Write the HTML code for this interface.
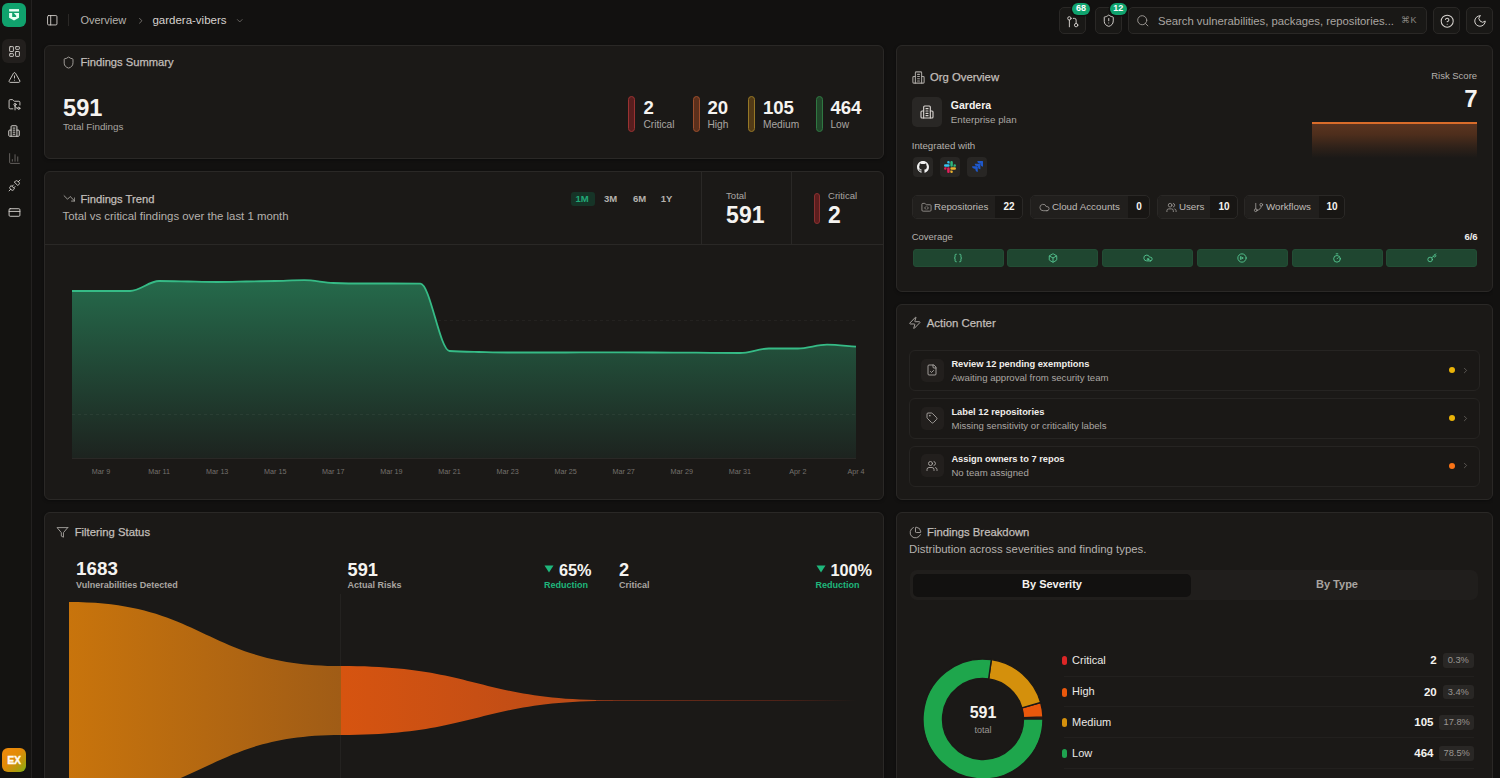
<!DOCTYPE html><html><head><meta charset="utf-8"><style>
*{margin:0;padding:0;box-sizing:border-box}
html,body{width:1500px;height:778px;overflow:hidden;background:#121110;font-family:"Liberation Sans",sans-serif}
.t{position:absolute;line-height:1;white-space:nowrap}
.m{-webkit-text-stroke:0.25px currentColor}
.b{position:absolute}
.card{position:absolute;background:#1b1917;border:1px solid #2a2826;border-radius:6px;box-shadow:0 1px 3px rgba(0,0,0,0.35)}
</style></head><body>
<div class="b" style="left:0px;top:0px;width:32px;height:778px;background:#141311;border-right:1px solid #232120"></div>
<div class="b" style="left:2px;top:3px;width:24px;height:24px;background:#10a26d;border-radius:6px"></div>
<svg class="b" style="left:2px;top:3px" width="24" height="24" viewBox="0 0 24 24"><rect x="7.1" y="6.1" width="9.9" height="2.4" fill="#e8fff3"/><path d="M7.1 10h9.9v4.7L12 17.4 7.1 14.7z" fill="#e8fff3"/><path d="M10.2 10.1h1.6l2.4 2.6v1.4h-4z" fill="#10a26d"/></svg>
<div class="b" style="left:2px;top:39px;width:24px;height:24px;background:#221f1d;border-radius:6px"></div>
<svg class="b" style="left:7.5px;top:44.5px;color:#d6d2ce" width="13" height="13" viewBox="0 0 24 24" fill="none" stroke="currentColor" stroke-linecap="round" stroke-linejoin="round" stroke-width="1.7"><rect x="3" y="3" width="7" height="9" rx="1"/><rect x="14" y="3" width="7" height="5" rx="1"/><rect x="14" y="12" width="7" height="9" rx="1"/><rect x="3" y="16" width="7" height="5" rx="1"/></svg>
<svg class="b" style="left:7.5px;top:71px;color:#d6d2ce" width="13" height="13" viewBox="0 0 24 24" fill="none" stroke="currentColor" stroke-linecap="round" stroke-linejoin="round" stroke-width="1.7"><path d="m21.73 18-8-14a2 2 0 0 0-3.48 0l-8 14A2 2 0 0 0 4 21h16a2 2 0 0 0 1.73-3"/><path d="M12 9v4"/><path d="M12 17h.01"/></svg>
<svg class="b" style="left:7.5px;top:97.5px;color:#d6d2ce" width="13" height="13" viewBox="0 0 24 24" fill="none" stroke="currentColor" stroke-linecap="round" stroke-linejoin="round" stroke-width="1.7"><path d="M9 20H4a2 2 0 0 1-2-2V5a2 2 0 0 1 2-2h3.9a2 2 0 0 1 1.69.9l.81 1.2a2 2 0 0 0 1.67.9H20a2 2 0 0 1 2 2v5"/><circle cx="13" cy="12" r="2"/><path d="M18 19c-2.8 0-5-2.2-5-5v8"/><circle cx="20" cy="19" r="2"/></svg>
<svg class="b" style="left:7px;top:124px;color:#d6d2ce" width="14" height="14" viewBox="0 0 24 24" fill="none" stroke="currentColor" stroke-linecap="round" stroke-linejoin="round" stroke-width="1.7"><path d="M7 21V4.5A1.5 1.5 0 0 1 8.5 3h7A1.5 1.5 0 0 1 17 4.5V21"/><path d="M7 10.5H4.5A1.5 1.5 0 0 0 3 12v7.5A1.5 1.5 0 0 0 4.5 21h15a1.5 1.5 0 0 0 1.5-1.5V12a1.5 1.5 0 0 0-1.5-1.5H17"/><path d="M10.5 7h3"/><path d="M10.5 10.5h3"/><path d="M10.5 14h3"/><path d="M10.5 17.5h3"/></svg>
<svg class="b" style="left:7.5px;top:151.5px;color:#6b6764" width="13" height="13" viewBox="0 0 24 24" fill="none" stroke="currentColor" stroke-linecap="round" stroke-linejoin="round" stroke-width="1.7"><path d="M3 3v16a2 2 0 0 0 2 2h16"/><path d="M18 17V9"/><path d="M13 17V5"/><path d="M8 17v-3"/></svg>
<svg class="b" style="left:7.5px;top:178.5px;color:#d6d2ce" width="13" height="13" viewBox="0 0 24 24" fill="none" stroke="currentColor" stroke-linecap="round" stroke-linejoin="round" stroke-width="1.7"><path d="m19 5 3-3"/><path d="m2 22 3-3"/><path d="M6.3 20.3a2.4 2.4 0 0 0 3.4 0L12 18l-6-6-2.3 2.3a2.4 2.4 0 0 0 0 3.4Z"/><path d="M7.5 13.5 10 11"/><path d="M10.5 16.5 13 14"/><path d="m12 6 6 6 2.3-2.3a2.4 2.4 0 0 0 0-3.4l-2.6-2.6a2.4 2.4 0 0 0-3.4 0Z"/></svg>
<svg class="b" style="left:7.5px;top:205.5px;color:#d6d2ce" width="13" height="13" viewBox="0 0 24 24" fill="none" stroke="currentColor" stroke-linecap="round" stroke-linejoin="round" stroke-width="1.7"><rect width="20" height="14" x="2" y="5" rx="2"/><line x1="2" x2="22" y1="10" y2="10"/></svg>
<div class="b" style="left:2px;top:748px;width:24px;height:24px;background:linear-gradient(135deg,#f08a0c 0%,#e28a08 45%,#b39a0c 75%,#7cb414 100%);border-radius:6px"></div>
<div class="t" style="left:-186.0px;width:400px;text-align:center;top:754.9px;font-size:10.5px;color:#fffaf0;font-weight:700;letter-spacing:-0.3px;-webkit-text-stroke:0.35px #fffaf0;">EX</div>
<svg class="b" style="left:45.8px;top:14.3px;color:#d6d2ce" width="12.5" height="12.5" viewBox="0 0 24 24" fill="none" stroke="currentColor" stroke-linecap="round" stroke-linejoin="round" stroke-width="1.7"><rect width="18" height="18" x="3" y="3" rx="2"/><path d="M9 3v18"/></svg>
<div class="b" style="left:68px;top:14px;width:1px;height:12px;background:#2a2826"></div>
<div class="t" style="left:80.4px;top:15.0px;font-size:11px;color:#b5b1ad;font-weight:400;">Overview</div>
<svg class="b" style="left:135.5px;top:15.5px;color:#8a8682" width="9.5" height="9.5" viewBox="0 0 24 24" fill="none" stroke="currentColor" stroke-linecap="round" stroke-linejoin="round" stroke-width="2"><path d="m9 18 6-6-6-6"/></svg>
<div class="t" style="left:152.4px;top:14.9px;font-size:11.5px;color:#d6d2ce;font-weight:400;">gardera-vibers</div>
<svg class="b" style="left:234.5px;top:15.5px;color:#7a7672" width="9.5" height="9.5" viewBox="0 0 24 24" fill="none" stroke="currentColor" stroke-linecap="round" stroke-linejoin="round" stroke-width="2"><path d="m6 9 6 6 6-6"/></svg>
<div class="b" style="left:1059px;top:7px;width:27px;height:27px;background:#191816;border:1px solid #2a2826;border-radius:5px"></div>
<svg class="b" style="left:1066px;top:14.5px;color:#d6d2ce" width="13.5" height="13.5" viewBox="0 0 24 24" fill="none" stroke="currentColor" stroke-linecap="round" stroke-linejoin="round" stroke-width="1.7"><circle cx="6" cy="6" r="3"/><path d="M6 9v12"/><circle cx="18" cy="18" r="3"/><path d="M18 15V9a3 3 0 0 0-3-3h-2"/></svg>
<div class="b" style="left:1072px;top:3px;width:18px;height:11.5px;background:#10a36e;border-radius:6px;box-shadow:0 0 0 1.5px #121110"></div>
<div class="t" style="left:881.0px;width:400px;text-align:center;top:3.8px;font-size:9px;color:#ffffff;font-weight:700;">68</div>
<div class="b" style="left:1095px;top:7px;width:27px;height:27px;background:#191816;border:1px solid #2a2826;border-radius:5px"></div>
<svg class="b" style="left:1102px;top:14px;color:#d6d2ce" width="13.5" height="13.5" viewBox="0 0 24 24" fill="none" stroke="currentColor" stroke-linecap="round" stroke-linejoin="round" stroke-width="1.7"><path d="M20 13c0 5-3.5 7.5-7.66 8.95a1 1 0 0 1-.67-.01C7.5 20.5 4 18 4 13V6a1 1 0 0 1 1-1c2 0 4.5-1.2 6.24-2.72a1.17 1.17 0 0 1 1.52 0C14.51 3.81 17 5 19 5a1 1 0 0 1 1 1z"/><path d="M12 8v4"/><path d="M12 16h.01"/></svg>
<div class="b" style="left:1110px;top:3px;width:16.5px;height:11.5px;background:#10a36e;border-radius:6px;box-shadow:0 0 0 1.5px #121110"></div>
<div class="t" style="left:918.2px;width:400px;text-align:center;top:3.8px;font-size:9px;color:#ffffff;font-weight:700;">12</div>
<div class="b" style="left:1128px;top:7px;width:299px;height:27px;background:#191816;border:1px solid #2a2826;border-radius:5px"></div>
<svg class="b" style="left:1135.8px;top:13.6px;color:#9a9692" width="13.6" height="13.6" viewBox="0 0 24 24" fill="none" stroke="currentColor" stroke-linecap="round" stroke-linejoin="round" stroke-width="1.7"><circle cx="11" cy="11" r="8"/><path d="m21 21-4.3-4.3"/></svg>
<div class="t" style="left:1157.9px;top:15.7px;font-size:11.3px;color:#a9a5a1;font-weight:400;">Search vulnerabilities, packages, repositories...</div>
<div class="t" style="left:1401.4px;top:16.3px;font-size:9px;color:#8a8682;font-weight:400;">&#8984;K</div>
<div class="b" style="left:1433px;top:7px;width:27px;height:27px;background:#191816;border:1px solid #2a2826;border-radius:5px"></div>
<svg class="b" style="left:1440px;top:13.5px;color:#d6d2ce" width="14.4" height="14.4" viewBox="0 0 24 24" fill="none" stroke="currentColor" stroke-linecap="round" stroke-linejoin="round" stroke-width="1.7"><circle cx="12" cy="12" r="10"/><path d="M9.09 9a3 3 0 0 1 5.83 1c0 2-3 3-3 3"/><path d="M12 17h.01"/></svg>
<div class="b" style="left:1466px;top:7px;width:27px;height:27px;background:#191816;border:1px solid #2a2826;border-radius:5px"></div>
<svg class="b" style="left:1472.5px;top:13.5px;color:#d6d2ce" width="14" height="14" viewBox="0 0 24 24" fill="none" stroke="currentColor" stroke-linecap="round" stroke-linejoin="round" stroke-width="1.7"><path d="M12 3a6 6 0 0 0 9 9 9 9 0 1 1-9-9Z"/></svg>
<div class="card" style="left:44px;top:45px;width:840px;height:114px"></div>
<svg class="b" style="left:61.8px;top:55.9px;color:#a8a4a0" width="13.2" height="13.2" viewBox="0 0 24 24" fill="none" stroke="currentColor" stroke-linecap="round" stroke-linejoin="round" stroke-width="1.7"><path d="M20 13c0 5-3.5 7.5-7.66 8.95a1 1 0 0 1-.67-.01C7.5 20.5 4 18 4 13V6a1 1 0 0 1 1-1c2 0 4.5-1.2 6.24-2.72a1.17 1.17 0 0 1 1.52 0C14.51 3.81 17 5 19 5a1 1 0 0 1 1 1z"/></svg>
<div class="t m" style="left:80.4px;top:56.7px;font-size:11.2px;color:#c2beba;font-weight:500;">Findings Summary</div>
<div class="t" style="left:63.1px;top:97.0px;font-size:23.6px;color:#f5f3f0;font-weight:700;">591</div>
<div class="t" style="left:62.9px;top:121.7px;font-size:9.8px;color:#aaa6a2;font-weight:400;">Total Findings</div>
<div class="b" style="left:628px;top:95.5px;width:7px;height:36px;background:#581e1e;border:1px solid #9a3232;border-radius:4px"></div>
<div class="t" style="left:643.4px;top:98.8px;font-size:18.6px;color:#f5f3f0;font-weight:700;">2</div>
<div class="t" style="left:643.4px;top:119.5px;font-size:10.2px;color:#aaa6a2;font-weight:400;">Critical</div>
<div class="b" style="left:692.5px;top:95.5px;width:7px;height:36px;background:#5c301c;border:1px solid #9c4e2c;border-radius:4px"></div>
<div class="t" style="left:707.4px;top:98.8px;font-size:18.6px;color:#f5f3f0;font-weight:700;">20</div>
<div class="t" style="left:707.4px;top:119.5px;font-size:10.2px;color:#aaa6a2;font-weight:400;">High</div>
<div class="b" style="left:748px;top:95.5px;width:7px;height:36px;background:#523a16;border:1px solid #967826;border-radius:4px"></div>
<div class="t" style="left:762.9px;top:98.8px;font-size:18.6px;color:#f5f3f0;font-weight:700;">105</div>
<div class="t" style="left:762.9px;top:119.5px;font-size:10.2px;color:#aaa6a2;font-weight:400;">Medium</div>
<div class="b" style="left:815.5px;top:95.5px;width:7px;height:36px;background:#22462a;border:1px solid #2f7842;border-radius:4px"></div>
<div class="t" style="left:830.4px;top:98.8px;font-size:18.6px;color:#f5f3f0;font-weight:700;">464</div>
<div class="t" style="left:830.4px;top:119.5px;font-size:10.2px;color:#aaa6a2;font-weight:400;">Low</div>
<div class="card" style="left:44px;top:171px;width:840px;height:329px"></div>
<div class="b" style="left:45px;top:244px;width:838px;height:1px;background:#2a2826"></div>
<div class="b" style="left:701px;top:172px;width:1px;height:72px;background:#2a2826"></div>
<div class="b" style="left:790.5px;top:172px;width:1px;height:72px;background:#2a2826"></div>
<svg class="b" style="left:62.5px;top:192px;color:#a8a4a0" width="12.8" height="12.8" viewBox="0 0 24 24" fill="none" stroke="currentColor" stroke-linecap="round" stroke-linejoin="round" stroke-width="1.7"><path d="m22 17-8.5-8.5-5 5L2 7"/><path d="M16 17h6v-6"/></svg>
<div class="t m" style="left:80.4px;top:194.1px;font-size:11.2px;color:#c2beba;font-weight:500;">Findings Trend</div>
<div class="t" style="left:62.6px;top:211.3px;font-size:11.4px;color:#b5b1ad;font-weight:400;">Total vs critical findings over the last 1 month</div>
<div class="b" style="left:570.5px;top:191.5px;width:24px;height:14.5px;background:#163427;border-radius:3px"></div>
<div class="t" style="left:382.0px;width:400px;text-align:center;top:193.8px;font-size:9.5px;color:#22a877;font-weight:700;">1M</div>
<div class="t" style="left:410.5px;width:400px;text-align:center;top:193.8px;font-size:9.5px;color:#b5b1ad;font-weight:700;">3M</div>
<div class="t" style="left:439.5px;width:400px;text-align:center;top:193.8px;font-size:9.5px;color:#b5b1ad;font-weight:700;">6M</div>
<div class="t" style="left:466.5px;width:400px;text-align:center;top:193.8px;font-size:9.5px;color:#b5b1ad;font-weight:700;">1Y</div>
<div class="t" style="left:726.1px;top:190.8px;font-size:9.5px;color:#aaa6a2;font-weight:400;">Total</div>
<div class="t" style="left:726.1px;top:204.2px;font-size:23px;color:#f5f3f0;font-weight:700;">591</div>
<div class="b" style="left:814px;top:192.5px;width:6px;height:31px;background:#5c1e1e;border:1px solid #8a3030;border-radius:3px"></div>
<div class="t" style="left:828.1px;top:190.8px;font-size:9.5px;color:#aaa6a2;font-weight:400;">Critical</div>
<div class="t" style="left:828.1px;top:204.2px;font-size:23px;color:#f5f3f0;font-weight:700;">2</div>
<svg class="b" style="left:0;top:0" width="1500" height="778" viewBox="0 0 1500 778">
<defs><linearGradient id="ga" x1="0" y1="280" x2="0" y2="459" gradientUnits="userSpaceOnUse"><stop offset="0" stop-color="#256a4b"/><stop offset="1" stop-color="#1d231f"/></linearGradient></defs>
<line x1="72" y1="320.5" x2="856" y2="320.5" stroke="#242220" stroke-width="1" stroke-dasharray="3 3"/>

<path d="M72.0,291.0C81.7,291.0,91.4,291.0,101.0,291.0C110.7,291.0,120.4,291.0,130.1,291.0C139.8,291.0,149.4,281.0,159.1,281.0C168.8,281.0,178.5,281.3,188.1,281.5C197.8,281.7,207.5,282.0,217.2,282.0C226.9,282.0,236.5,281.7,246.2,281.5C255.9,281.3,265.6,281.2,275.3,281.0C284.9,280.8,294.6,280.2,304.3,280.2C314.0,280.2,323.7,282.7,333.3,283.0C343.0,283.3,352.7,283.5,362.4,283.5C372.0,283.5,381.7,283.5,391.4,283.5C401.1,283.5,410.8,283.6,420.4,283.7C430.1,283.8,439.8,350.3,449.5,351.0C459.2,351.7,468.8,351.8,478.5,352.0C488.2,352.2,497.9,352.5,507.6,352.5C517.2,352.5,526.9,352.5,536.6,352.5C546.3,352.5,556.0,352.5,565.6,352.5C575.3,352.5,585.0,352.3,594.7,352.3C604.3,352.3,614.0,352.3,623.7,352.3C633.4,352.3,643.1,352.4,652.7,352.5C662.4,352.6,672.1,352.6,681.8,352.6C691.5,352.7,701.1,352.7,710.8,352.8C720.5,352.9,730.2,353.0,739.9,353.0C749.5,353.0,759.2,348.5,768.9,348.5C778.6,348.5,788.2,348.5,797.9,348.5C807.6,348.5,817.3,344.6,827.0,344.6C836.6,344.6,846.3,346.0,856.0,346.7L856,458.5L72,458.5Z" fill="url(#ga)"/>
<line x1="72" y1="414.5" x2="856" y2="414.5" stroke="#ffffff" stroke-opacity="0.05" stroke-width="1" stroke-dasharray="3 3"/>
<line x1="72" y1="458.5" x2="856" y2="458.5" stroke="#2a2826" stroke-width="1"/>
<path d="M72.0,291.0C81.7,291.0,91.4,291.0,101.0,291.0C110.7,291.0,120.4,291.0,130.1,291.0C139.8,291.0,149.4,281.0,159.1,281.0C168.8,281.0,178.5,281.3,188.1,281.5C197.8,281.7,207.5,282.0,217.2,282.0C226.9,282.0,236.5,281.7,246.2,281.5C255.9,281.3,265.6,281.2,275.3,281.0C284.9,280.8,294.6,280.2,304.3,280.2C314.0,280.2,323.7,282.7,333.3,283.0C343.0,283.3,352.7,283.5,362.4,283.5C372.0,283.5,381.7,283.5,391.4,283.5C401.1,283.5,410.8,283.6,420.4,283.7C430.1,283.8,439.8,350.3,449.5,351.0C459.2,351.7,468.8,351.8,478.5,352.0C488.2,352.2,497.9,352.5,507.6,352.5C517.2,352.5,526.9,352.5,536.6,352.5C546.3,352.5,556.0,352.5,565.6,352.5C575.3,352.5,585.0,352.3,594.7,352.3C604.3,352.3,614.0,352.3,623.7,352.3C633.4,352.3,643.1,352.4,652.7,352.5C662.4,352.6,672.1,352.6,681.8,352.6C691.5,352.7,701.1,352.7,710.8,352.8C720.5,352.9,730.2,353.0,739.9,353.0C749.5,353.0,759.2,348.5,768.9,348.5C778.6,348.5,788.2,348.5,797.9,348.5C807.6,348.5,817.3,344.6,827.0,344.6C836.6,344.6,846.3,346.0,856.0,346.7" fill="none" stroke="#36bb86" stroke-width="1.8"/>
</svg>
<div class="t" style="left:-99.0px;width:400px;text-align:center;top:468.1px;font-size:7.2px;color:#75716d;font-weight:400;">Mar 9</div>
<div class="t" style="left:-40.9px;width:400px;text-align:center;top:468.1px;font-size:7.2px;color:#75716d;font-weight:400;">Mar 11</div>
<div class="t" style="left:17.2px;width:400px;text-align:center;top:468.1px;font-size:7.2px;color:#75716d;font-weight:400;">Mar 13</div>
<div class="t" style="left:75.3px;width:400px;text-align:center;top:468.1px;font-size:7.2px;color:#75716d;font-weight:400;">Mar 15</div>
<div class="t" style="left:133.3px;width:400px;text-align:center;top:468.1px;font-size:7.2px;color:#75716d;font-weight:400;">Mar 17</div>
<div class="t" style="left:191.4px;width:400px;text-align:center;top:468.1px;font-size:7.2px;color:#75716d;font-weight:400;">Mar 19</div>
<div class="t" style="left:249.5px;width:400px;text-align:center;top:468.1px;font-size:7.2px;color:#75716d;font-weight:400;">Mar 21</div>
<div class="t" style="left:307.6px;width:400px;text-align:center;top:468.1px;font-size:7.2px;color:#75716d;font-weight:400;">Mar 23</div>
<div class="t" style="left:365.6px;width:400px;text-align:center;top:468.1px;font-size:7.2px;color:#75716d;font-weight:400;">Mar 25</div>
<div class="t" style="left:423.7px;width:400px;text-align:center;top:468.1px;font-size:7.2px;color:#75716d;font-weight:400;">Mar 27</div>
<div class="t" style="left:481.8px;width:400px;text-align:center;top:468.1px;font-size:7.2px;color:#75716d;font-weight:400;">Mar 29</div>
<div class="t" style="left:539.9px;width:400px;text-align:center;top:468.1px;font-size:7.2px;color:#75716d;font-weight:400;">Mar 31</div>
<div class="t" style="left:597.9px;width:400px;text-align:center;top:468.1px;font-size:7.2px;color:#75716d;font-weight:400;">Apr 2</div>
<div class="t" style="left:656.0px;width:400px;text-align:center;top:468.1px;font-size:7.2px;color:#75716d;font-weight:400;">Apr 4</div>
<div class="card" style="left:44px;top:512px;width:840px;height:300px"></div>
<svg class="b" style="left:56.2px;top:526.1px;color:#a8a4a0" width="12.8" height="12.8" viewBox="0 0 24 24" fill="none" stroke="currentColor" stroke-linecap="round" stroke-linejoin="round" stroke-width="1.7"><polygon points="22 3 2 3 10 12.46 10 19 14 21 14 12.46 22 3"/></svg>
<div class="t m" style="left:74.7px;top:526.8px;font-size:11.3px;color:#c2beba;font-weight:500;">Filtering Status</div>
<div class="b" style="left:340px;top:594px;width:1px;height:184px;background:#242220"></div>
<svg class="b" style="left:0;top:0" width="1500" height="778" viewBox="0 0 1500 778">
<defs>
<linearGradient id="s1" x1="69" y1="0" x2="341" y2="0" gradientUnits="userSpaceOnUse"><stop offset="0" stop-color="#c8740c"/><stop offset="1" stop-color="#a05c16"/></linearGradient>
<linearGradient id="s2" x1="341" y1="0" x2="613" y2="0" gradientUnits="userSpaceOnUse"><stop offset="0" stop-color="#d65410"/><stop offset="1" stop-color="#b84a18"/></linearGradient>
</defs>
<path d="M69,602 C205,602 205,666 341,666 L341,735 C205,735 205,799 69,799 Z" fill="url(#s1)"/>
<path d="M341,666 C477,666 477,700.3 613,700.3 L613,700.7 C477,700.7 477,735 341,735 Z" fill="url(#s2)"/>
<linearGradient id="s3" x1="613" y1="0" x2="856" y2="0" gradientUnits="userSpaceOnUse"><stop offset="0" stop-color="#8a3418"/><stop offset="0.7" stop-color="#5a2418"/><stop offset="1" stop-color="#1b1917"/></linearGradient><rect x="596" y="700.1" width="260" height="0.8" fill="url(#s3)"/>
</svg>
<div class="t" style="left:76.1px;top:560.4px;font-size:18.8px;color:#f5f3f0;font-weight:700;">1683</div>
<div class="t" style="left:76.1px;top:580.5px;font-size:9px;color:#aaa6a2;font-weight:700;">Vulnerabilities Detected</div>
<div class="t" style="left:347.6px;top:560.8px;font-size:18.2px;color:#f5f3f0;font-weight:700;">591</div>
<div class="t" style="left:347.6px;top:580.5px;font-size:9px;color:#aaa6a2;font-weight:700;">Actual Risks</div>
<svg class="b" style="left:544px;top:565px" width="10" height="8" viewBox="0 0 10 8"><path d="M0.5 0.5h9L5 7.5z" fill="#1fb77c"/></svg>
<div class="t" style="left:559.0px;top:562.4px;font-size:16.3px;color:#f5f3f0;font-weight:700;">65%</div>
<div class="t" style="left:544.1px;top:580.5px;font-size:9px;color:#1fb77c;font-weight:700;">Reduction</div>
<div class="t" style="left:619.1px;top:560.8px;font-size:18.2px;color:#f5f3f0;font-weight:700;">2</div>
<div class="t" style="left:619.1px;top:580.5px;font-size:9px;color:#aaa6a2;font-weight:700;">Critical</div>
<svg class="b" style="left:815.5px;top:565px" width="10" height="8" viewBox="0 0 10 8"><path d="M0.5 0.5h9L5 7.5z" fill="#1fb77c"/></svg>
<div class="t" style="left:830.4px;top:562.4px;font-size:16.3px;color:#f5f3f0;font-weight:700;">100%</div>
<div class="t" style="left:815.4px;top:580.5px;font-size:9px;color:#1fb77c;font-weight:700;">Reduction</div>
<div class="card" style="left:896px;top:45px;width:597px;height:247px"></div>
<svg class="b" style="left:910.5px;top:70px;color:#a8a4a0" width="15" height="15" viewBox="0 0 24 24" fill="none" stroke="currentColor" stroke-linecap="round" stroke-linejoin="round" stroke-width="1.7"><path d="M7 21V4.5A1.5 1.5 0 0 1 8.5 3h7A1.5 1.5 0 0 1 17 4.5V21"/><path d="M7 10.5H4.5A1.5 1.5 0 0 0 3 12v7.5A1.5 1.5 0 0 0 4.5 21h15a1.5 1.5 0 0 0 1.5-1.5V12a1.5 1.5 0 0 0-1.5-1.5H17"/><path d="M10.5 7h3"/><path d="M10.5 10.5h3"/><path d="M10.5 14h3"/><path d="M10.5 17.5h3"/></svg>
<div class="t m" style="left:930.0px;top:71.7px;font-size:11.3px;color:#c2beba;font-weight:500;">Org Overview</div>
<div class="b" style="left:912px;top:97px;width:30px;height:30px;background:#292725;border-radius:5px"></div>
<svg class="b" style="left:919px;top:104px;color:#d6d2ce" width="16" height="16" viewBox="0 0 24 24" fill="none" stroke="currentColor" stroke-linecap="round" stroke-linejoin="round" stroke-width="1.7"><path d="M7 21V4.5A1.5 1.5 0 0 1 8.5 3h7A1.5 1.5 0 0 1 17 4.5V21"/><path d="M7 10.5H4.5A1.5 1.5 0 0 0 3 12v7.5A1.5 1.5 0 0 0 4.5 21h15a1.5 1.5 0 0 0 1.5-1.5V12a1.5 1.5 0 0 0-1.5-1.5H17"/><path d="M10.5 7h3"/><path d="M10.5 10.5h3"/><path d="M10.5 14h3"/><path d="M10.5 17.5h3"/></svg>
<div class="t" style="left:950.8px;top:100.0px;font-size:10.5px;color:#f5f3f0;font-weight:700;">Gardera</div>
<div class="t" style="left:950.8px;top:114.8px;font-size:9.8px;color:#aaa6a2;font-weight:400;">Enterprise plan</div>
<div class="t" style="left:911.7px;top:140.7px;font-size:9.7px;color:#b5b1ad;font-weight:400;">Integrated with</div>
<div class="b" style="left:913px;top:156.5px;width:20px;height:20px;background:#282624;border-radius:4px"></div>
<div class="b" style="left:940px;top:156.5px;width:20px;height:20px;background:#282624;border-radius:4px"></div>
<div class="b" style="left:967px;top:156.5px;width:20px;height:20px;background:#282624;border-radius:4px"></div>
<svg class="b" style="left:917px;top:160.5px" width="12" height="12" viewBox="0 0 16 16"><path fill="#f2f2f2" d="M8 0C3.58 0 0 3.58 0 8c0 3.54 2.29 6.53 5.47 7.59.4.07.55-.17.55-.38 0-.19-.01-.82-.01-1.49-2.01.37-2.53-.49-2.69-.94-.09-.23-.48-.94-.82-1.13-.28-.15-.68-.52-.01-.53.63-.01 1.08.58 1.23.82.72 1.21 1.87.87 2.33.66.07-.52.28-.87.51-1.07-1.78-.2-3.64-.89-3.64-3.95 0-.87.31-1.59.82-2.15-.08-.2-.36-1.02.08-2.12 0 0 .67-.21 2.2.82.64-.18 1.32-.27 2-.27.68 0 1.36.09 2 .27 1.53-1.04 2.2-.82 2.2-.82.44 1.1.16 1.92.08 2.12.51.56.82 1.27.82 2.15 0 3.07-1.87 3.75-3.65 3.95.29.25.54.73.54 1.48 0 1.07-.01 1.93-.01 2.2 0 .21.15.46.55.38A8.013 8.013 0 0016 8c0-4.42-3.58-8-8-8z"/></svg>
<svg class="b" style="left:944px;top:160.5px" width="12" height="12" viewBox="0 0 24 24"><path d="M5.042 15.165a2.528 2.528 0 0 1-2.52 2.523A2.528 2.528 0 0 1 0 15.165a2.527 2.527 0 0 1 2.522-2.52h2.52v2.52zM6.313 15.165a2.527 2.527 0 0 1 2.521-2.52 2.527 2.527 0 0 1 2.521 2.52v6.313A2.528 2.528 0 0 1 8.834 24a2.528 2.528 0 0 1-2.521-2.522v-6.313z" fill="#E01E5A"/><path d="M8.834 5.042a2.528 2.528 0 0 1-2.521-2.52A2.528 2.528 0 0 1 8.834 0a2.528 2.528 0 0 1 2.521 2.522v2.52H8.834zM8.834 6.313a2.528 2.528 0 0 1 2.521 2.521 2.528 2.528 0 0 1-2.521 2.521H2.522A2.528 2.528 0 0 1 0 8.834a2.528 2.528 0 0 1 2.522-2.521h6.312z" fill="#36C5F0"/><path d="M18.956 8.834a2.528 2.528 0 0 1 2.522-2.521A2.528 2.528 0 0 1 24 8.834a2.528 2.528 0 0 1-2.522 2.521h-2.522V8.834zM17.688 8.834a2.528 2.528 0 0 1-2.523 2.521 2.527 2.527 0 0 1-2.52-2.521V2.522A2.527 2.527 0 0 1 15.165 0a2.528 2.528 0 0 1 2.523 2.522v6.312z" fill="#2EB67D"/><path d="M15.165 18.956a2.528 2.528 0 0 1 2.523 2.522A2.528 2.528 0 0 1 15.165 24a2.527 2.527 0 0 1-2.52-2.522v-2.522h2.52zM15.165 17.688a2.527 2.527 0 0 1-2.52-2.523 2.526 2.526 0 0 1 2.52-2.52h6.313A2.527 2.527 0 0 1 24 15.165a2.528 2.528 0 0 1-2.522 2.523h-6.313z" fill="#ECB22E"/></svg>
<svg class="b" style="left:971.5px;top:161px" width="11" height="11" viewBox="0 0 24 24"><path fill="#1e58cc" d="M11.571 11.513H0a5.218 5.218 0 0 0 5.232 5.215h2.13v2.057A5.215 5.215 0 0 0 12.575 24V12.518a1.005 1.005 0 0 0-1.005-1.005zm5.723-5.756H5.736a5.215 5.215 0 0 0 5.215 5.214h2.129v2.058a5.218 5.218 0 0 0 5.215 5.214V6.758a1.001 1.001 0 0 0-1.001-1.001zM23.013 0H11.455a5.215 5.215 0 0 0 5.215 5.215h2.129v2.057A5.215 5.215 0 0 0 24 12.483V1.005A1.001 1.001 0 0 0 23.013 0Z"/></svg>
<div class="t" style="right:22.9px;top:70.8px;font-size:9.5px;color:#b5b1ad;font-weight:400;">Risk Score</div>
<div class="t" style="right:22.4px;top:86.7px;font-size:24px;color:#f5f3f0;font-weight:700;">7</div>
<div class="b" style="left:1312px;top:124px;width:165px;height:34px;background:linear-gradient(180deg,#5a3420 0%,#4e2e1c 30%,#2e2119 70%,#1b1917 100%)"></div>
<div class="b" style="left:1312px;top:122px;width:165px;height:2px;background:#d96c2a"></div>
<div class="b" style="left:912px;top:195px;width:111px;height:24px;background:#181614;border:1px solid #2a2826;border-radius:5px;overflow:hidden"></div>
<div class="b" style="left:913px;top:196px;width:82px;height:22px;background:#211f1d;border-radius:4px 0 0 4px"></div>
<svg class="b" style="left:920.5px;top:201.5px;color:#a8a4a0" width="11" height="11" viewBox="0 0 24 24" fill="none" stroke="currentColor" stroke-linecap="round" stroke-linejoin="round" stroke-width="1.7"><path d="M10 10.5 8 13l2 2.5"/><path d="m14 10.5 2 2.5-2 2.5"/><path d="M20 20a2 2 0 0 0 2-2V8a2 2 0 0 0-2-2h-7.9a2 2 0 0 1-1.69-.9L9.6 3.9A2 2 0 0 0 7.93 3H4a2 2 0 0 0-2 2v13a2 2 0 0 0 2 2z"/></svg>
<div class="t" style="left:933.9px;top:202.1px;font-size:9.8px;color:#bfbbb7;font-weight:400;">Repositories</div>
<div class="t" style="left:809.0px;width:400px;text-align:center;top:201.5px;font-size:10px;color:#f5f3f0;font-weight:700;">22</div>
<div class="b" style="left:1030px;top:195px;width:120px;height:24px;background:#181614;border:1px solid #2a2826;border-radius:5px;overflow:hidden"></div>
<div class="b" style="left:1031px;top:196px;width:97px;height:22px;background:#211f1d;border-radius:4px 0 0 4px"></div>
<svg class="b" style="left:1038.5px;top:201.5px;color:#a8a4a0" width="11" height="11" viewBox="0 0 24 24" fill="none" stroke="currentColor" stroke-linecap="round" stroke-linejoin="round" stroke-width="1.7"><path d="M17.5 19H9a7 7 0 1 1 6.71-9h1.79a4.5 4.5 0 1 1 0 9Z"/></svg>
<div class="t" style="left:1051.9px;top:202.1px;font-size:9.8px;color:#bfbbb7;font-weight:400;">Cloud Accounts</div>
<div class="t" style="left:939.0px;width:400px;text-align:center;top:201.5px;font-size:10px;color:#f5f3f0;font-weight:700;">0</div>
<div class="b" style="left:1157px;top:195px;width:81px;height:24px;background:#181614;border:1px solid #2a2826;border-radius:5px;overflow:hidden"></div>
<div class="b" style="left:1158px;top:196px;width:52px;height:22px;background:#211f1d;border-radius:4px 0 0 4px"></div>
<svg class="b" style="left:1165.5px;top:201.5px;color:#a8a4a0" width="11" height="11" viewBox="0 0 24 24" fill="none" stroke="currentColor" stroke-linecap="round" stroke-linejoin="round" stroke-width="1.7"><path d="M16 21v-2a4 4 0 0 0-4-4H6a4 4 0 0 0-4 4v2"/><circle cx="9" cy="7" r="4"/><path d="M22 21v-2a4 4 0 0 0-3-3.87"/><path d="M16 3.13a4 4 0 0 1 0 7.75"/></svg>
<div class="t" style="left:1178.9px;top:202.1px;font-size:9.8px;color:#bfbbb7;font-weight:400;">Users</div>
<div class="t" style="left:1024.0px;width:400px;text-align:center;top:201.5px;font-size:10px;color:#f5f3f0;font-weight:700;">10</div>
<div class="b" style="left:1244px;top:195px;width:101px;height:24px;background:#181614;border:1px solid #2a2826;border-radius:5px;overflow:hidden"></div>
<div class="b" style="left:1245px;top:196px;width:74px;height:22px;background:#211f1d;border-radius:4px 0 0 4px"></div>
<svg class="b" style="left:1252.5px;top:201.5px;color:#a8a4a0" width="11" height="11" viewBox="0 0 24 24" fill="none" stroke="currentColor" stroke-linecap="round" stroke-linejoin="round" stroke-width="1.7"><line x1="6" x2="6" y1="3" y2="15"/><circle cx="18" cy="6" r="3"/><circle cx="6" cy="18" r="3"/><path d="M18 9a9 9 0 0 1-9 9"/></svg>
<div class="t" style="left:1265.9px;top:202.1px;font-size:9.8px;color:#bfbbb7;font-weight:400;">Workflows</div>
<div class="t" style="left:1132.0px;width:400px;text-align:center;top:201.5px;font-size:10px;color:#f5f3f0;font-weight:700;">10</div>
<div class="t" style="left:911.7px;top:232.4px;font-size:9.5px;color:#b5b1ad;font-weight:400;">Coverage</div>
<div class="t" style="right:22.4px;top:232.4px;font-size:9.5px;color:#f0eeeb;font-weight:700;">6/6</div>
<div class="b" style="left:912.5px;top:249px;width:91.2px;height:17.5px;background:#1f4630;border:1px solid #234d35;border-radius:3px"></div>
<svg class="b" style="left:953.1px;top:252.5px;color:#5ad39a" width="10" height="10" viewBox="0 0 24 24" fill="none" stroke="currentColor" stroke-linecap="round" stroke-linejoin="round" stroke-width="2"><path d="M8 3H7a2 2 0 0 0-2 2v5a2 2 0 0 1-2 2 2 2 0 0 1 2 2v5c0 1.1.9 2 2 2h1"/><path d="M16 21h1a2 2 0 0 0 2-2v-5c0-1.1.9-2 2-2a2 2 0 0 1-2-2V5a2 2 0 0 0-2-2h-1"/></svg>
<div class="b" style="left:1007.2px;top:249px;width:91.2px;height:17.5px;background:#1f4630;border:1px solid #234d35;border-radius:3px"></div>
<svg class="b" style="left:1047.9px;top:252.5px;color:#5ad39a" width="10" height="10" viewBox="0 0 24 24" fill="none" stroke="currentColor" stroke-linecap="round" stroke-linejoin="round" stroke-width="2"><path d="M21 8a2 2 0 0 0-1-1.73l-7-4a2 2 0 0 0-2 0l-7 4A2 2 0 0 0 3 8v8a2 2 0 0 0 1 1.73l7 4a2 2 0 0 0 2 0l7-4A2 2 0 0 0 21 16Z"/><path d="m3.3 7 8.7 5 8.7-5"/><path d="M12 22V12"/></svg>
<div class="b" style="left:1102.0px;top:249px;width:91.2px;height:17.5px;background:#1f4630;border:1px solid #234d35;border-radius:3px"></div>
<svg class="b" style="left:1142.6px;top:252.5px;color:#5ad39a" width="10" height="10" viewBox="0 0 24 24" fill="none" stroke="currentColor" stroke-linecap="round" stroke-linejoin="round" stroke-width="2"><path d="M17.5 19H9a7 7 0 1 1 6.71-9h1.79a4.5 4.5 0 1 1 0 9Z"/><circle cx="12" cy="15" r="2"/></svg>
<div class="b" style="left:1196.8px;top:249px;width:91.2px;height:17.5px;background:#1f4630;border:1px solid #234d35;border-radius:3px"></div>
<svg class="b" style="left:1237.4px;top:252.5px;color:#5ad39a" width="10" height="10" viewBox="0 0 24 24" fill="none" stroke="currentColor" stroke-linecap="round" stroke-linejoin="round" stroke-width="2"><circle cx="12" cy="12" r="10"/><path d="m9 9 6 3-6 3z"/></svg>
<div class="b" style="left:1291.5px;top:249px;width:91.2px;height:17.5px;background:#1f4630;border:1px solid #234d35;border-radius:3px"></div>
<svg class="b" style="left:1332.1px;top:252.5px;color:#5ad39a" width="10" height="10" viewBox="0 0 24 24" fill="none" stroke="currentColor" stroke-linecap="round" stroke-linejoin="round" stroke-width="2"><line x1="10" x2="14" y1="2" y2="2"/><line x1="12" x2="15" y1="14" y2="11"/><circle cx="12" cy="14" r="8"/></svg>
<div class="b" style="left:1386.2px;top:249px;width:91.2px;height:17.5px;background:#1f4630;border:1px solid #234d35;border-radius:3px"></div>
<svg class="b" style="left:1426.9px;top:252.5px;color:#5ad39a" width="10" height="10" viewBox="0 0 24 24" fill="none" stroke="currentColor" stroke-linecap="round" stroke-linejoin="round" stroke-width="2"><path d="m15.5 7.5 2.3 2.3a1 1 0 0 0 1.4 0l2.1-2.1a1 1 0 0 0 0-1.4L19 4"/><path d="m21 2-9.6 9.6"/><circle cx="7.5" cy="15.5" r="5.5"/></svg>
<div class="card" style="left:896px;top:304px;width:597px;height:196px"></div>
<svg class="b" style="left:908.3px;top:316.2px;color:#a8a4a0" width="13.7" height="13.7" viewBox="0 0 24 24" fill="none" stroke="currentColor" stroke-linecap="round" stroke-linejoin="round" stroke-width="1.7"><path d="M4 14a1 1 0 0 1-.78-1.63l9.9-10.2a.5.5 0 0 1 .86.46l-1.92 6.02A1 1 0 0 0 13 10h7a1 1 0 0 1 .78 1.63l-9.9 10.2a.5.5 0 0 1-.86-.46l1.92-6.02A1 1 0 0 0 11 14z"/></svg>
<div class="t m" style="left:926.7px;top:317.8px;font-size:11.4px;color:#c2beba;font-weight:500;">Action Center</div>
<div class="b" style="left:909px;top:350px;width:571px;height:41px;background:#1a1816;border:1px solid #262422;border-radius:6px"></div>
<div class="b" style="left:920.5px;top:358.5px;width:23px;height:23px;background:#221f1d;border-radius:5px"></div>
<svg class="b" style="left:926px;top:364px;color:#b5b1ad" width="12" height="12" viewBox="0 0 24 24" fill="none" stroke="currentColor" stroke-linecap="round" stroke-linejoin="round" stroke-width="1.7"><path d="M15 2H6a2 2 0 0 0-2 2v16a2 2 0 0 0 2 2h12a2 2 0 0 0 2-2V7Z"/><path d="M14 2v4a2 2 0 0 0 2 2h4"/><path d="m9 15 2 2 4-4"/></svg>
<div class="t" style="left:951.4px;top:359.5px;font-size:9.3px;color:#f0eeeb;font-weight:700;">Review 12 pending exemptions</div>
<div class="t" style="left:951.4px;top:372.5px;font-size:9.6px;color:#aaa6a2;font-weight:400;">Awaiting approval from security team</div>
<div class="b" style="left:1449px;top:367px;width:6px;height:6px;background:#eab308;border-radius:50%"></div>
<svg class="b" style="left:1461px;top:365.5px;color:#7a7672" width="9" height="9" viewBox="0 0 24 24" fill="none" stroke="currentColor" stroke-linecap="round" stroke-linejoin="round" stroke-width="1.7"><path d="m9 18 6-6-6-6"/></svg>
<div class="b" style="left:909px;top:398px;width:571px;height:41px;background:#1a1816;border:1px solid #262422;border-radius:6px"></div>
<div class="b" style="left:920.5px;top:406.5px;width:23px;height:23px;background:#221f1d;border-radius:5px"></div>
<svg class="b" style="left:926px;top:412px;color:#b5b1ad" width="12" height="12" viewBox="0 0 24 24" fill="none" stroke="currentColor" stroke-linecap="round" stroke-linejoin="round" stroke-width="1.7"><path d="M12.586 2.586A2 2 0 0 0 11.172 2H4a2 2 0 0 0-2 2v7.172a2 2 0 0 0 .586 1.414l8.704 8.704a2.426 2.426 0 0 0 3.42 0l6.58-6.58a2.426 2.426 0 0 0 0-3.42z"/><circle cx="7.5" cy="7.5" r=".5" fill="currentColor"/></svg>
<div class="t" style="left:951.4px;top:407.5px;font-size:9.3px;color:#f0eeeb;font-weight:700;">Label 12 repositories</div>
<div class="t" style="left:951.4px;top:420.5px;font-size:9.6px;color:#aaa6a2;font-weight:400;">Missing sensitivity or criticality labels</div>
<div class="b" style="left:1449px;top:415px;width:6px;height:6px;background:#eab308;border-radius:50%"></div>
<svg class="b" style="left:1461px;top:413.5px;color:#7a7672" width="9" height="9" viewBox="0 0 24 24" fill="none" stroke="currentColor" stroke-linecap="round" stroke-linejoin="round" stroke-width="1.7"><path d="m9 18 6-6-6-6"/></svg>
<div class="b" style="left:909px;top:445.5px;width:571px;height:41px;background:#1a1816;border:1px solid #262422;border-radius:6px"></div>
<div class="b" style="left:920.5px;top:454.0px;width:23px;height:23px;background:#221f1d;border-radius:5px"></div>
<svg class="b" style="left:926px;top:459.5px;color:#b5b1ad" width="12" height="12" viewBox="0 0 24 24" fill="none" stroke="currentColor" stroke-linecap="round" stroke-linejoin="round" stroke-width="1.7"><path d="M16 21v-2a4 4 0 0 0-4-4H6a4 4 0 0 0-4 4v2"/><circle cx="9" cy="7" r="4"/><path d="M22 21v-2a4 4 0 0 0-3-3.87"/><path d="M16 3.13a4 4 0 0 1 0 7.75"/></svg>
<div class="t" style="left:951.4px;top:455.0px;font-size:9.3px;color:#f0eeeb;font-weight:700;">Assign owners to 7 repos</div>
<div class="t" style="left:951.4px;top:468.0px;font-size:9.6px;color:#aaa6a2;font-weight:400;">No team assigned</div>
<div class="b" style="left:1449px;top:462.5px;width:6px;height:6px;background:#f97316;border-radius:50%"></div>
<svg class="b" style="left:1461px;top:461.0px;color:#7a7672" width="9" height="9" viewBox="0 0 24 24" fill="none" stroke="currentColor" stroke-linecap="round" stroke-linejoin="round" stroke-width="1.7"><path d="m9 18 6-6-6-6"/></svg>
<div class="card" style="left:896px;top:512px;width:597px;height:300px"></div>
<svg class="b" style="left:908.5px;top:525.5px;color:#a8a4a0" width="13" height="13" viewBox="0 0 24 24" fill="none" stroke="currentColor" stroke-linecap="round" stroke-linejoin="round" stroke-width="1.7"><path d="M21 12c.552 0 1.005-.449.95-.998a10 10 0 0 0-8.953-8.951c-.55-.055-.998.398-.998.95v8a1 1 0 0 0 1 1z"/><path d="M21.21 15.89A10 10 0 1 1 8 2.83"/></svg>
<div class="t m" style="left:927.0px;top:526.5px;font-size:11.3px;color:#c2beba;font-weight:500;">Findings Breakdown</div>
<div class="t" style="left:909.0px;top:543.5px;font-size:11.4px;color:#b5b1ad;font-weight:400;">Distribution across severities and finding types.</div>
<div class="b" style="left:910px;top:570px;width:568px;height:30px;background:#201e1c;border-radius:7px"></div>
<div class="b" style="left:913px;top:573.5px;width:278px;height:23px;background:#121110;border-radius:5px"></div>
<div class="t" style="left:852.0px;width:400px;text-align:center;top:579.2px;font-size:11px;color:#f5f3f0;font-weight:700;">By Severity</div>
<div class="t" style="left:1137.0px;width:400px;text-align:center;top:579.2px;font-size:11px;color:#a9a5a1;font-weight:700;">By Type</div>
<svg class="b" style="left:0;top:0" width="1500" height="778" viewBox="0 0 1500 778"><path d="M1043.00,719.00A60,60 0 0 0 1042.96,716.91L1023.48,717.59A40.5,40.5 0 0 1 1023.50,719.00Z" fill="#dc2626" stroke="#1b1917" stroke-width="1.4"/><path d="M1042.96,716.91A60,60 0 0 0 1040.68,702.46L1021.93,707.84A40.5,40.5 0 0 1 1023.48,717.59Z" fill="#ea580c" stroke="#1b1917" stroke-width="1.4"/><path d="M1040.68,702.46A60,60 0 0 0 991.35,659.58L988.64,678.89A40.5,40.5 0 0 1 1021.93,707.84Z" fill="#d4900c" stroke="#1b1917" stroke-width="1.4"/><path d="M991.35,659.58A60,60 0 1 0 1043.00,719.00L1023.50,719.00A40.5,40.5 0 1 1 988.64,678.89Z" fill="#1ea64c" stroke="#1b1917" stroke-width="1.4"/></svg>
<div class="t" style="left:783.0px;width:400px;text-align:center;top:705.2px;font-size:16px;color:#f5f3f0;font-weight:700;">591</div>
<div class="t" style="left:783.0px;width:400px;text-align:center;top:725.8px;font-size:9px;color:#9a9692;font-weight:400;">total</div>
<div class="b" style="left:1061.5px;top:656px;width:5px;height:9px;background:#dc2626;border-radius:2.5px"></div>
<div class="t" style="left:1072.1px;top:654.9px;font-size:11px;color:#ebe9e6;font-weight:400;">Critical</div>
<div class="b" style="left:1442.6px;top:653px;width:31.40000000000009px;height:14.5px;background:#292725;border-radius:3px"></div>
<div class="t" style="left:1258.3px;width:400px;text-align:center;top:656.3px;font-size:9.3px;color:#9a9692;font-weight:400;">0.3%</div>
<div class="t" style="right:63.3px;top:655.3px;font-size:11.5px;color:#f5f3f0;font-weight:700;">2</div>
<div class="b" style="left:1061.5px;top:687.5px;width:5px;height:9px;background:#ea580c;border-radius:2.5px"></div>
<div class="t" style="left:1072.1px;top:686.4px;font-size:11px;color:#ebe9e6;font-weight:400;">High</div>
<div class="b" style="left:1442.6px;top:684.5px;width:31.40000000000009px;height:14.5px;background:#292725;border-radius:3px"></div>
<div class="t" style="left:1258.3px;width:400px;text-align:center;top:687.8px;font-size:9.3px;color:#9a9692;font-weight:400;">3.4%</div>
<div class="t" style="right:63.3px;top:686.8px;font-size:11.5px;color:#f5f3f0;font-weight:700;">20</div>
<div class="b" style="left:1061.5px;top:718px;width:5px;height:9px;background:#d4900c;border-radius:2.5px"></div>
<div class="t" style="left:1072.1px;top:716.9px;font-size:11px;color:#ebe9e6;font-weight:400;">Medium</div>
<div class="b" style="left:1439.4px;top:715px;width:34.59999999999991px;height:14.5px;background:#292725;border-radius:3px"></div>
<div class="t" style="left:1256.7px;width:400px;text-align:center;top:718.3px;font-size:9.3px;color:#9a9692;font-weight:400;">17.8%</div>
<div class="t" style="right:66.5px;top:717.3px;font-size:11.5px;color:#f5f3f0;font-weight:700;">105</div>
<div class="b" style="left:1061.5px;top:749px;width:5px;height:9px;background:#1fa34f;border-radius:2.5px"></div>
<div class="t" style="left:1072.1px;top:747.9px;font-size:11px;color:#ebe9e6;font-weight:400;">Low</div>
<div class="b" style="left:1439.4px;top:746px;width:34.59999999999991px;height:14.5px;background:#292725;border-radius:3px"></div>
<div class="t" style="left:1256.7px;width:400px;text-align:center;top:749.3px;font-size:9.3px;color:#9a9692;font-weight:400;">78.5%</div>
<div class="t" style="right:66.5px;top:748.3px;font-size:11.5px;color:#f5f3f0;font-weight:700;">464</div>
<div class="b" style="left:1064px;top:675.5px;width:410px;height:1px;background:#22201e"></div>
<div class="b" style="left:1064px;top:706px;width:410px;height:1px;background:#22201e"></div>
<div class="b" style="left:1064px;top:737px;width:410px;height:1px;background:#22201e"></div>
<div class="b" style="left:1064px;top:767.5px;width:410px;height:1px;background:#22201e"></div>
<div class="b" style="left:1493px;top:0px;width:7px;height:778px;background:#121110"></div>
</body></html>
